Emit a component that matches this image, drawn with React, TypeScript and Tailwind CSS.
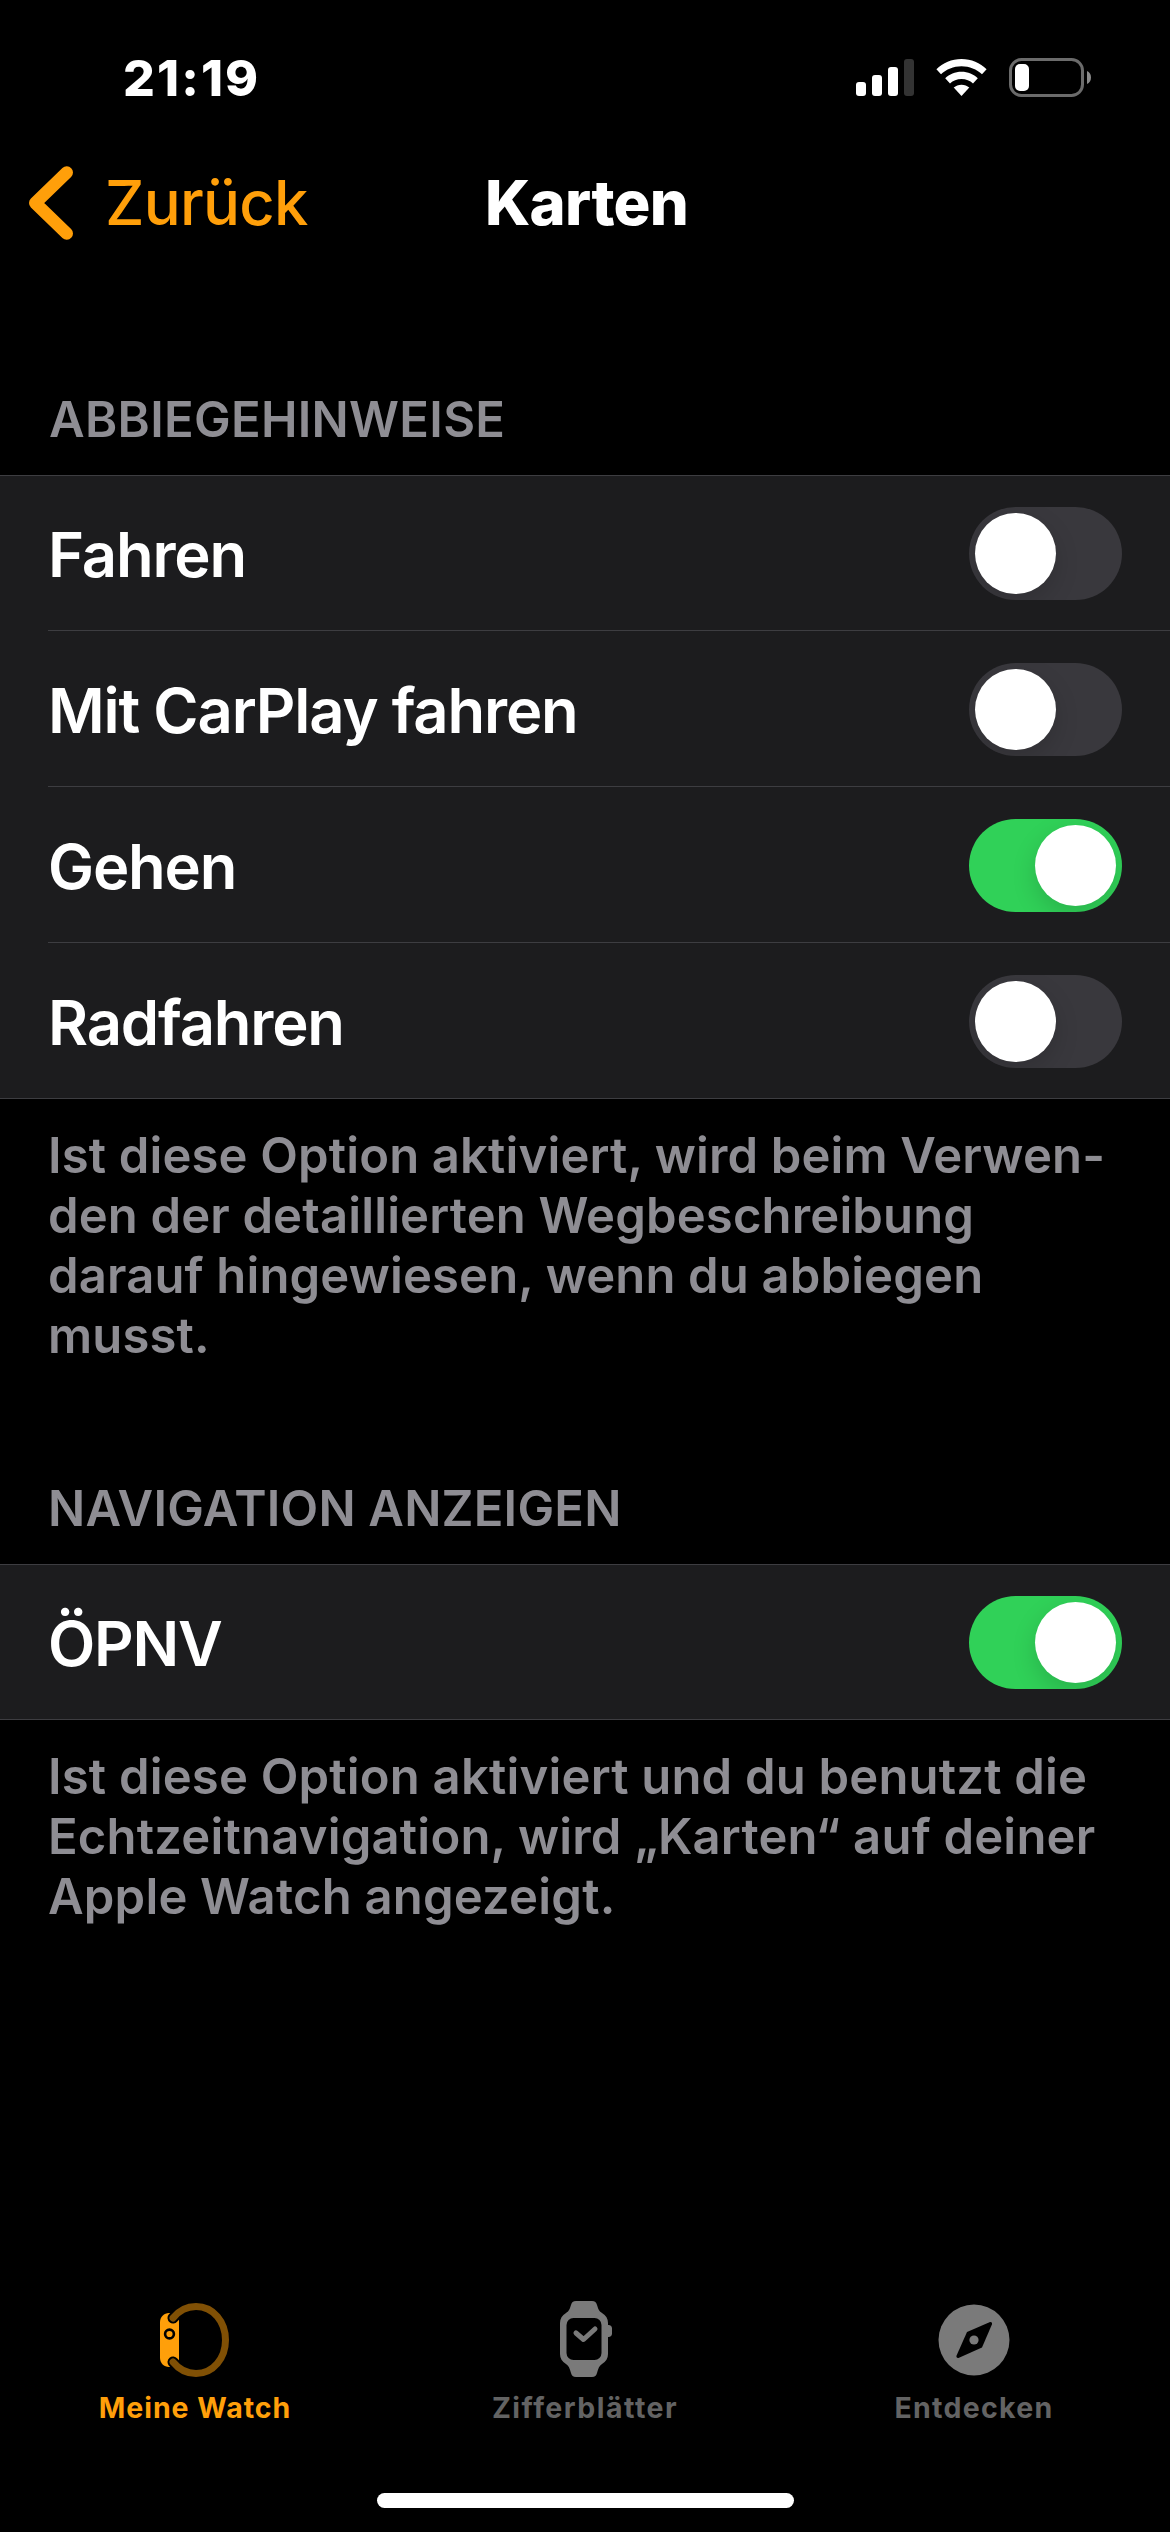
import { useState } from 'react'

const hints = [
    { id: 'drive', label: 'Fahren', on: false },
    { id: 'carplay', label: 'Mit CarPlay fahren', on: false },
    { id: 'walk', label: 'Gehen', on: true },
    { id: 'cycle', label: 'Radfahren', on: false },
]

function Toggle({ on, onChange }: { on: boolean; onChange: () => void }) {
    return (
        <button
            type="button"
            role="switch"
            aria-checked={on}
            onClick={onChange}
            className={`flex h-[93px] w-[153px] shrink-0 items-center overflow-hidden rounded-full p-[6px] ${on ? 'justify-end bg-[#30d158]' : 'justify-start bg-[#39383d]'}`}
        >
            <span className="size-[81px] rounded-full bg-white shadow-[0_9px_24px_rgba(0,0,0,0.15)]" />
        </button>
    )
}

function Row({ label, on, last, onChange }: { label: string; on: boolean; last?: boolean; onChange: () => void }) {
    return (
        <div className="flex h-[156px] pl-[48px]">
            <div className={`flex flex-1 items-center justify-between pr-[48px] ${last ? 'pt-px' : 'border-b border-[#3d3d41] pt-[2px]'}`}>
                <span className="pt-[2px] text-[61.5px] leading-[72px] font-[570] tracking-[-0.019em] text-white">{label}</span>
                <Toggle on={on} onChange={onChange} />
            </div>
        </div>
    )
}

function StatusBar() {
    return (
        <div className="flex h-[154px] items-start justify-between pt-[48px] pr-[79px] pl-[123px]">
            <span className="text-[50px] leading-[60px] font-extrabold tracking-[0.042em] text-white">21:19</span>
            <div className="flex pt-[10px]">
                <svg width="58" height="39" viewBox="0 0 58 39" fill="#fff">
                    <rect x="0" y="24" width="10" height="14" rx="3" />
                    <rect x="16" y="17" width="10" height="21" rx="3" />
                    <rect x="32" y="9" width="10" height="29" rx="3" />
                    <rect x="48" y="1" width="10" height="37" rx="3" fill="#333" />
                </svg>
                <svg className="ml-[22px]" width="51" height="39" viewBox="0 0 51 39" fill="#fff">
                    <path d="M25.5 1C35.3 1 44.2 4.9 50.6 11.2L46 16.2C40.7 11.2 33.5 8.2 25.5 8.2S10.3 11.2 5 16.2L0.4 11.2C6.8 4.9 15.7 1 25.5 1Z" />
                    <path d="M25.5 13.7C31.9 13.7 37.6 16.2 41.8 20.2L37 25.4C34 22.6 30 21 25.5 21S17 22.6 14 25.4L9.2 20.2C13.4 16.2 19.1 13.7 25.5 13.7Z" />
                    <path d="M25.5 26.7C28.5 26.7 31.2 27.8 33.3 29.6L25.5 38L17.7 29.6C19.8 27.8 22.5 26.7 25.5 26.7Z" />
                </svg>
                <svg className="ml-[22px]" width="82" height="39" viewBox="0 0 82 39">
                    <rect x="1.5" y="1.5" width="72" height="36" rx="11" fill="none" stroke="#6b6b6b" strokeWidth="3" />
                    <rect x="6" y="6" width="14" height="27" rx="5" fill="#fff" />
                    <path d="M78 13C80.5 14 82 16.5 82 19.5S80.5 25 78 26Z" fill="#8a8a8a" />
                </svg>
            </div>
        </div>
    )
}

function WatchSideIcon() {
    return (
        <svg width="70" height="76" viewBox="0 0 70 76">
            <path d="M9 11H19V65H9C4 65 0 61 0 56V20C0 15 4 11 9 11Z" fill="#ff9f0a" />
            <path d="M13 16C19 8.5 27 4.5 36 4.5C53.5 4.5 65.5 20 65.5 38S53.5 71.5 36 71.5C27 71.5 19 67.5 13 60" fill="none" stroke="#000" strokeWidth="11" strokeLinecap="round" />
            <path d="M13 16C19 8.5 27 4.5 36 4.5C53.5 4.5 65.5 20 65.5 38S53.5 71.5 36 71.5C27 71.5 19 67.5 13 60" fill="none" stroke="#805005" strokeWidth="7" strokeLinecap="round" />
            <circle cx="9.5" cy="32" r="4.4" fill="none" stroke="#000" strokeWidth="2.6" />
        </svg>
    )
}

function WatchFaceIcon() {
    return (
        <svg width="54" height="78" viewBox="0 0 54 78">
            <path d="M17 1H33C36 1 37.3 2.5 38 5C39.4 9.7 40.3 11.3 43 13C47 15.5 49 18.5 49 23V25H49.5C51.7 25 53 26.5 53 28.5V33.5C53 35.5 51.7 37 49.5 37H49V54C49 58.5 47 61.5 43 64C40.3 65.7 39.4 68.3 38 73C37.3 75.5 36 77 33 77H17C14 77 12.7 75.5 12 73C10.6 68.3 9.7 65.7 7 64C3 61.5 1 58.5 1 54V23C1 18.5 3 15.5 7 13C9.7 11.3 10.6 9.7 12 5C12.7 2.5 14 1 17 1Z" fill="#7a7a7a" />
            <rect x="7.5" y="18" width="35" height="42" rx="7" fill="#000" />
            <path d="M17 33L24.5 39.5L36 29" fill="none" stroke="#7a7a7a" strokeWidth="5" strokeLinecap="round" strokeLinejoin="round" />
        </svg>
    )
}

function CompassIcon() {
    return (
        <svg width="72" height="72" viewBox="0 0 72 72">
            <circle cx="36" cy="36" r="35.5" fill="#7a7a7a" />
            <path d="M29 28L51.5 18.2C53.3 17.5 54.6 18.7 53.9 20.5L44 43.5L21 53.7C19.2 54.4 17.9 53.2 18.6 51.4Z" fill="#000" />
            <circle cx="36" cy="36" r="4.6" fill="#7a7a7a" />
        </svg>
    )
}

export default function App() {
    const [settings, setSettings] = useState(hints)
    const [transit, setTransit] = useState(true)

    const toggleHint = (id: string) => {
        setSettings(settings.map((s) => (s.id === id ? { ...s, on: !s.on } : s)))
    }

    return (
        <div className="flex h-[2532px] w-[1170px] flex-col overflow-hidden bg-black font-['Inter',sans-serif]">
            <StatusBar />

            <header className="grid h-[97px] grid-cols-3 items-center">
                <button type="button" className="flex items-center pl-[29px] text-[#ff9f0a]">
                    <svg width="44" height="76" viewBox="0 0 44 76" fill="none" stroke="#ff9f0a" strokeWidth="12.5" strokeLinecap="round" strokeLinejoin="round">
                        <path d="M37.75 7.5L6.25 38L37.75 68.5" />
                    </svg>
                    <span className="ml-[32px] text-[61.5px] leading-[76px] font-medium tracking-[-0.012em]">Zurück</span>
                </button>
                <h1 className="pl-[3px] text-center text-[61.5px] leading-[76px] font-extrabold tracking-[-0.012em] text-white">Karten</h1>
            </header>

            <main className="flex-1">
                <h2 className="mt-[139px] pl-[49px] text-[49px] leading-[60px] font-[570] tracking-[0.006em] text-[#8e8d93]">ABBIEGEHINWEISE</h2>
                <section className="mt-[25px] bg-[#1c1c1e] shadow-[inset_0_1px_0_#3d3d41,inset_0_-1px_0_#3d3d41]">
                    {settings.map((s, i) => (
                        <Row key={s.id} label={s.label} on={s.on} last={i === settings.length - 1} onChange={() => toggleHint(s.id)} />
                    ))}
                </section>
                <p className="mt-[27px] pl-[48px] text-[49px] leading-[60px] font-[570] tracking-[0.003em] whitespace-nowrap text-[#8e8d93]">
                    Ist diese Option aktiviert, wird beim Verwen-<br />
                    den der detaillierten Wegbeschreibung<br />
                    darauf hingewiesen, wenn du abbiegen<br />
                    musst.
                </p>

                <h2 className="mt-[113px] pl-[48px] text-[49px] leading-[60px] font-[570] tracking-[0.004em] text-[#8e8d93]">NAVIGATION ANZEIGEN</h2>
                <section className="mt-[25px] bg-[#1c1c1e] shadow-[inset_0_1px_0_#3d3d41,inset_0_-1px_0_#3d3d41]">
                    <Row label="ÖPNV" on={transit} last onChange={() => setTransit(!transit)} />
                </section>
                <p className="mt-[27px] pl-[48px] text-[49px] leading-[60px] font-[570] tracking-[0.004em] whitespace-nowrap text-[#8e8d93]">
                    Ist diese Option aktiviert und du benutzt die<br />
                    Echtzeitnavigation, wird „Karten“ auf deiner<br />
                    Apple Watch angezeigt.
                </p>
            </main>

            <nav className="grid h-[152px] grid-cols-3 text-[28.5px] leading-[43px] font-bold">
                <button type="button" className="flex flex-col items-center tracking-[0.034em] text-[#ff9f0a]">
                    <span className="flex h-[92px] items-center"><WatchSideIcon /></span>
                    Meine Watch
                </button>
                <button type="button" className="flex flex-col items-center tracking-[0.052em] text-[#636363]">
                    <span className="flex h-[92px] items-center pb-[2px] pl-[2px]"><WatchFaceIcon /></span>
                    Zifferblätter
                </button>
                <button type="button" className="flex flex-col items-center pr-[2px] tracking-[0.045em] text-[#636363]">
                    <span className="flex h-[92px] items-center"><CompassIcon /></span>
                    Entdecken
                </button>
            </nav>

            {/* Home indicator */}
            <div className="flex h-[86px] items-end justify-center pb-[24px]">
                <div className="h-[15px] w-[417px] rounded-full bg-white" />
            </div>
        </div>
    )
}
